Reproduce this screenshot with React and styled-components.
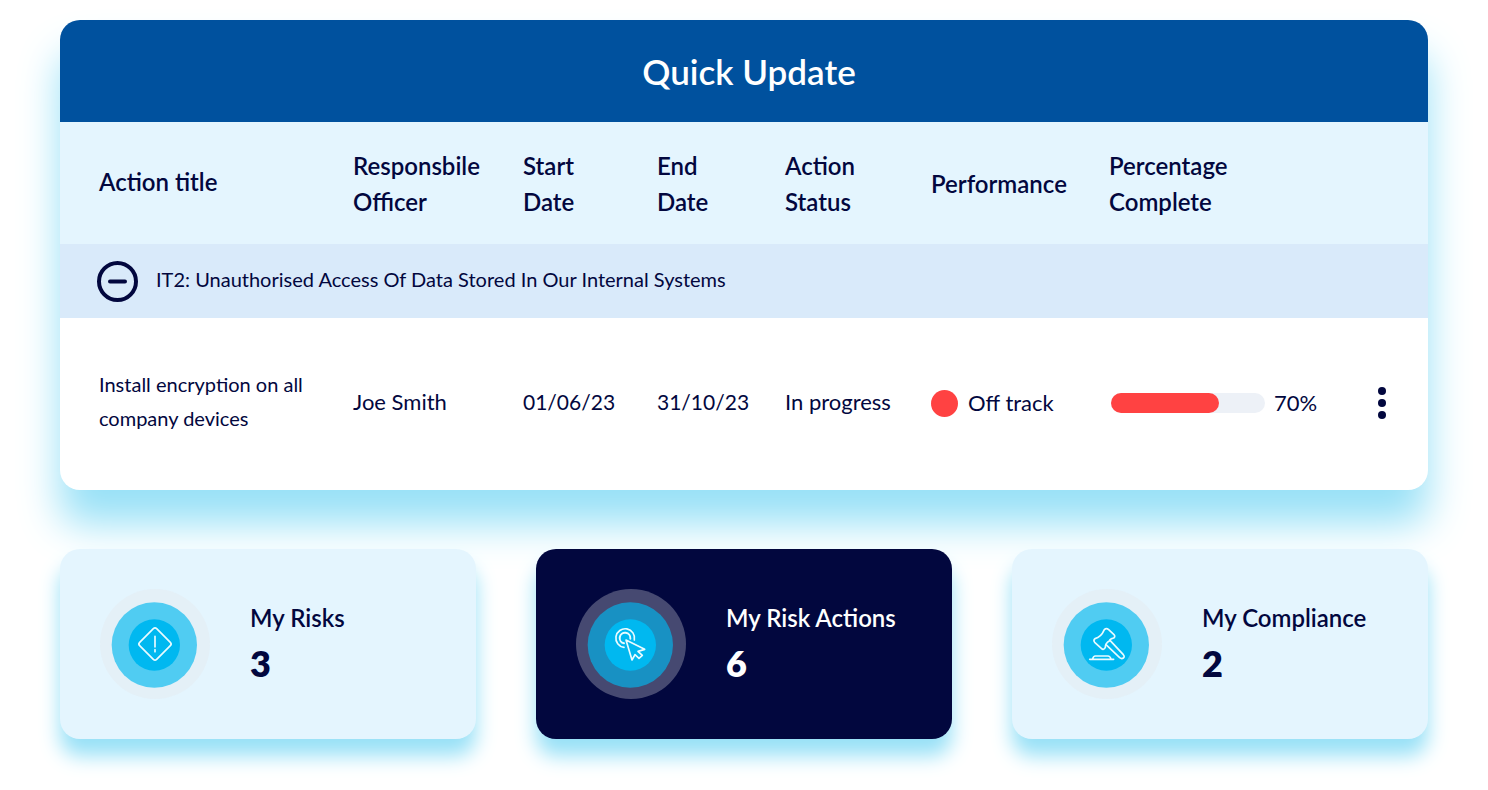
import React from 'react'
import styled, { createGlobalStyle } from 'styled-components'

const colors = {
  navy: '#02073e',
  blue: '#00519e',
  pale: '#e4f5fe',
  group: '#d9eafa',
  cyan: '#00b8f0',
  red: '#ff4242',
  glow: '#98e1f7',
}

const GlobalStyles = createGlobalStyle`
  * {
    box-sizing: border-box;
  }

  body {
    margin: 0;
    background: #fff;
    color: ${colors.navy};
    font-family: Lato, 'Open Sans', sans-serif;
  }
`

const Page = styled.main`
  padding: 20px 60px 50px;
`

const Panel = styled.section`
  border-radius: 20px;
  background: #fff;
  box-shadow: 0 34px 40px ${colors.glow};
`

const PanelTitle = styled.h1`
  margin: 0;
  padding: 27px 0 27px 10px;
  border-radius: 20px 20px 0 0;
  background: ${colors.blue};
  color: #fff;
  font-size: 35px;
  font-weight: 600;
  line-height: 48px;
  text-align: center;
`

const Table = styled.table`
  width: 100%;
  table-layout: fixed;
  border-collapse: collapse;
  text-align: left;
`

const Col = styled.col`
  width: ${props => props.$width}px;
`

const HeadCell = styled.th`
  height: 122px;
  padding: 2px 0 0;
  background: ${colors.pale};
  font-size: 24px;
  font-weight: 600;
  line-height: 36px;
`

const TitleHeadCell = styled(HeadCell)`
  padding: 0 0 2px 39px;
`

const GroupCell = styled.th`
  height: 74px;
  padding: 0 37px;
  background: ${colors.group};
  font-size: 20px;
  font-weight: 400;
`

const Group = styled.div`
  display: flex;
  align-items: center;
  gap: 18px;
  line-height: 34px;
`

const GroupName = styled.span`
  padding-bottom: 4px;
`

const IconButton = styled.button`
  display: flex;
  padding: 0;
  border: 0;
  background: none;
  color: inherit;
  cursor: pointer;
`

const Cell = styled.td`
  height: 172px;
  padding: 0 0 2px;
  font-size: 22px;
  line-height: 34px;
`

const TextCell = styled(Cell)`
  padding-bottom: 4px;
`

const DateCell = styled(TextCell)`
  font-size: 21px;
`

const TitleCell = styled(Cell)`
  padding: 0 40px 6px 39px;
  font-size: 20px;
`

const Inline = styled.div`
  display: flex;
  align-items: center;
  gap: ${props => props.$gap}px;
`

const StatusDot = styled.span`
  width: 27px;
  height: 27px;
  border-radius: 50%;
  background: ${colors.red};
`

const Track = styled.div`
  flex: none;
  width: 154px;
  height: 20px;
  margin-left: 2px;
  border-radius: 10px;
  background: #edf1f7;
`

const Fill = styled.div`
  height: 100%;
  border-radius: 10px;
  background: ${colors.red};
`

const Cards = styled.section`
  display: grid;
  grid-template-columns: repeat(3, 1fr);
  gap: 60px;
  margin-top: 59px;
`

const Card = styled.article`
  display: flex;
  align-items: center;
  gap: 40px;
  padding: 40px;
  border-radius: 20px;
  background: ${props => (props.$active ? colors.navy : colors.pale)};
  color: ${props => (props.$active ? '#fff' : colors.navy)};
  box-shadow: 0 17px 20px ${colors.glow};
`

const CardTitle = styled.h2`
  margin: 0;
  font-size: 24px;
  font-weight: 600;
  line-height: 40px;
  white-space: nowrap;
`

const CardCount = styled.p`
  margin: 0;
  padding-bottom: 2px;
  font-size: 36px;
  font-weight: 800;
  line-height: 50px;
`

const Badge = styled.svg`
  flex: none;
  width: 110px;
  height: 110px;
`

const columns = [
  ['Action title', 293],
  ['Responsbile Officer', 170],
  ['Start Date', 134],
  ['End Date', 128],
  ['Action Status', 146],
  ['Performance', 178],
  ['Percentage Complete', 219],
]

const RiskIcon = () => (
  <>
    <path d="M190 146 L149 187 Q144 192 149 197 L190 238 Q195 243 200 238 L241 197 Q246 192 241 187 L200 146 Q195 141 190 146 Z" />
    <path d="M195 169 V201 M195 209 V215" />
  </>
)

const ClickIcon = () => (
  <>
    <path d="M174 202 A28 28 0 1 1 205 180" />
    <path d="M174 190 A16 16 0 1 1 193 176" strokeWidth="6" />
    <path d="M180 180 L236 208 L216 214 L229 226 L219 235 L207 224 L198 240 Z" />
  </>
)

const GavelIcon = () => (
  <>
    <path d="M187 149 Q193 143 200 149 L216 164 Q221 169 215 174 Q204 176 202 183 Q190 189 190 202 Q185 212 178 205 L158 187 Q153 181 159 176 Q177 172 187 149 Z" />
    <path d="M204 181 L244 224 Q249 230 244 234 Q239 238 233 233 L192 194" />
    <path d="M143 238 H215 M152 237 Q154 228 160 228 H198 Q204 228 207 237" />
  </>
)

const CardBadge = ({ children }) => (
  <Badge viewBox="30 27 330 330" aria-hidden="true">
    <circle cx="195" cy="192" r="165" fill="#e5e4e8" opacity="0.3" />
    <circle cx="193" cy="195" r="128" fill={colors.cyan} opacity="0.65" />
    <circle cx="193" cy="195" r="77" fill={colors.cyan} />
    <g
      fill="none"
      stroke="#e9fbff"
      strokeWidth="5"
      strokeLinecap="round"
      strokeLinejoin="round"
    >
      {children}
    </g>
  </Badge>
)

const cards = [
  { title: 'My Risks', count: 3, Icon: RiskIcon },
  { title: 'My Risk Actions', count: 6, Icon: ClickIcon, active: true },
  { title: 'My Compliance', count: 2, Icon: GavelIcon },
]

const percentage = 70

export default function App() {
  return (
    <Page>
      <GlobalStyles />
      <Panel>
        <PanelTitle>Quick Update</PanelTitle>
        <Table>
          <colgroup>
            {columns.map(([name, width]) => (
              <Col key={name} $width={width} />
            ))}
            <col />
          </colgroup>
          <thead>
            <tr>
              {columns.map(([name], i) =>
                i === 0 ? (
                  <TitleHeadCell key={name} scope="col">
                    {name}
                  </TitleHeadCell>
                ) : (
                  <HeadCell key={name} scope="col">
                    {name.split(' ').map(word => (
                      <div key={word}>{word}</div>
                    ))}
                  </HeadCell>
                )
              )}
              <HeadCell as="td" />
            </tr>
          </thead>
          <tbody>
            <tr>
              <GroupCell colSpan={8} scope="rowgroup">
                <Group>
                  <IconButton type="button" aria-label="Collapse">
                    <svg width="41" height="41" viewBox="0 0 41 41">
                      <g
                        fill="none"
                        stroke="currentColor"
                        strokeWidth="4"
                        strokeLinecap="round"
                      >
                        <circle cx="20.5" cy="20.5" r="18.5" />
                        <path d="M13 20.5 H28" />
                      </g>
                    </svg>
                  </IconButton>
                  <GroupName>
                    IT2: Unauthorised Access Of Data Stored In Our Internal
                    Systems
                  </GroupName>
                </Group>
              </GroupCell>
            </tr>
            <tr>
              <TitleCell>Install encryption on all company devices</TitleCell>
              <TextCell>Joe Smith</TextCell>
              <DateCell>01/06/23</DateCell>
              <DateCell>31/10/23</DateCell>
              <TextCell>In progress</TextCell>
              <Cell>
                <Inline $gap={10}>
                  <StatusDot />
                  Off track
                </Inline>
              </Cell>
              <Cell>
                <Inline $gap={9}>
                  <Track
                    role="progressbar"
                    aria-label="Percentage complete"
                    aria-valuenow={percentage}
                  >
                    <Fill style={{ width: `${percentage}%` }} />
                  </Track>
                  {percentage}%
                </Inline>
              </Cell>
              <Cell>
                <IconButton type="button" aria-label="More options">
                  <svg width="108" height="34" viewBox="0 0 108 34">
                    <g fill="currentColor">
                      <circle cx="54" cy="5" r="4" />
                      <circle cx="54" cy="17" r="4" />
                      <circle cx="54" cy="29" r="4" />
                    </g>
                  </svg>
                </IconButton>
              </Cell>
            </tr>
          </tbody>
        </Table>
      </Panel>
      <Cards>
        {cards.map(({ title, count, Icon, active }) => (
          <Card key={title} $active={active}>
            <CardBadge>
              <Icon />
            </CardBadge>
            <div>
              <CardTitle>{title}</CardTitle>
              <CardCount>{count}</CardCount>
            </div>
          </Card>
        ))}
      </Cards>
    </Page>
  )
}
